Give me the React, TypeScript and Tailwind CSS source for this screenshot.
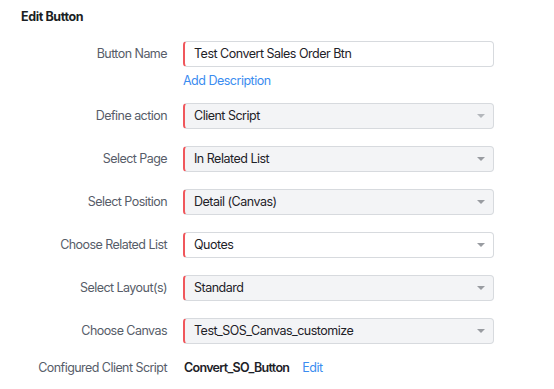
import React from "react";

const Caret = ({ light = false }: { light?: boolean }) => (
  <svg width="8" height="4" viewBox="0 0 8 4" className="absolute right-[8px] top-1/2 -translate-y-1/2">
    <path d="M0 0 L8 0 L4 4 Z" fill={light ? "#b4b7bc" : "#999ca1"} />
  </svg>
);

function Field({ value, select = true, white = false, light = false }: { value: string; select?: boolean; white?: boolean; light?: boolean }) {
  return (
    <div
      className={`relative w-[311px] h-[26px] rounded-[4px] border border-[#d7dade] border-l-2 border-l-[#f0575c] flex items-center pl-[9px] text-[12.5px] tracking-[-0.5px] text-[#1e2228] ${
        white ? "bg-white" : "bg-[#f3f4f6]"
      }`}
    >
      <span>{value}</span>
      {select && <Caret light={light} />}
    </div>
  );
}

function Row({ label, children }: { label: string; children: React.ReactNode }) {
  return (
    <div className="flex items-center">
      <div className="w-[167px] text-right text-[12.5px] tracking-[-0.55px] text-[#575d69]">{label}</div>
      <div className="ml-[16px]">{children}</div>
    </div>
  );
}

export default function App() {
  return (
    <div
      className="w-[554px] h-[389px] bg-white pl-[21px] pt-[8px]"
      style={{ fontFamily: "Inter, 'Noto Sans', sans-serif" }}
    >
      <div className="text-[12.5px] font-bold tracking-[-0.4px] text-[#1b1f24] leading-[18px]">Edit Button</div>
      <div className="-ml-[21px] mt-[15px] flex flex-col">
        <Row label="Button Name">
          <Field value="Test Convert Sales Order Btn" select={false} white />
        </Row>
        <div className="ml-[183px] mt-[5px] text-[12.5px] tracking-[-0.5px] text-[#3b8cf0] leading-[18px]">Add Description</div>
        <div className="mt-[13px] flex flex-col gap-[17px]">
          <Row label="Define action">
            <Field value="Client Script" light />
          </Row>
          <Row label="Select Page">
            <Field value="In Related List" />
          </Row>
          <Row label="Select Position">
            <Field value="Detail (Canvas)" />
          </Row>
          <Row label="Choose Related List">
            <Field value="Quotes" white />
          </Row>
          <Row label="Select Layout(s)">
            <Field value="Standard" />
          </Row>
          <Row label="Choose Canvas">
            <Field value="Test_SOS_Canvas_customize" />
          </Row>
        </div>
        <div className="mt-[15px] flex items-center h-[18px] text-[12.5px] tracking-[-0.5px]">
          <div className="w-[167px] text-right text-[#575d69] tracking-[-0.55px]">Configured Client Script</div>
          <div className="ml-[17px] font-semibold tracking-[-0.7px] text-[#1e2228]">Convert_SO_Button</div>
          <div className="ml-[13px] text-[#3b8cf0]">Edit</div>
        </div>
      </div>
    </div>
  );
}
